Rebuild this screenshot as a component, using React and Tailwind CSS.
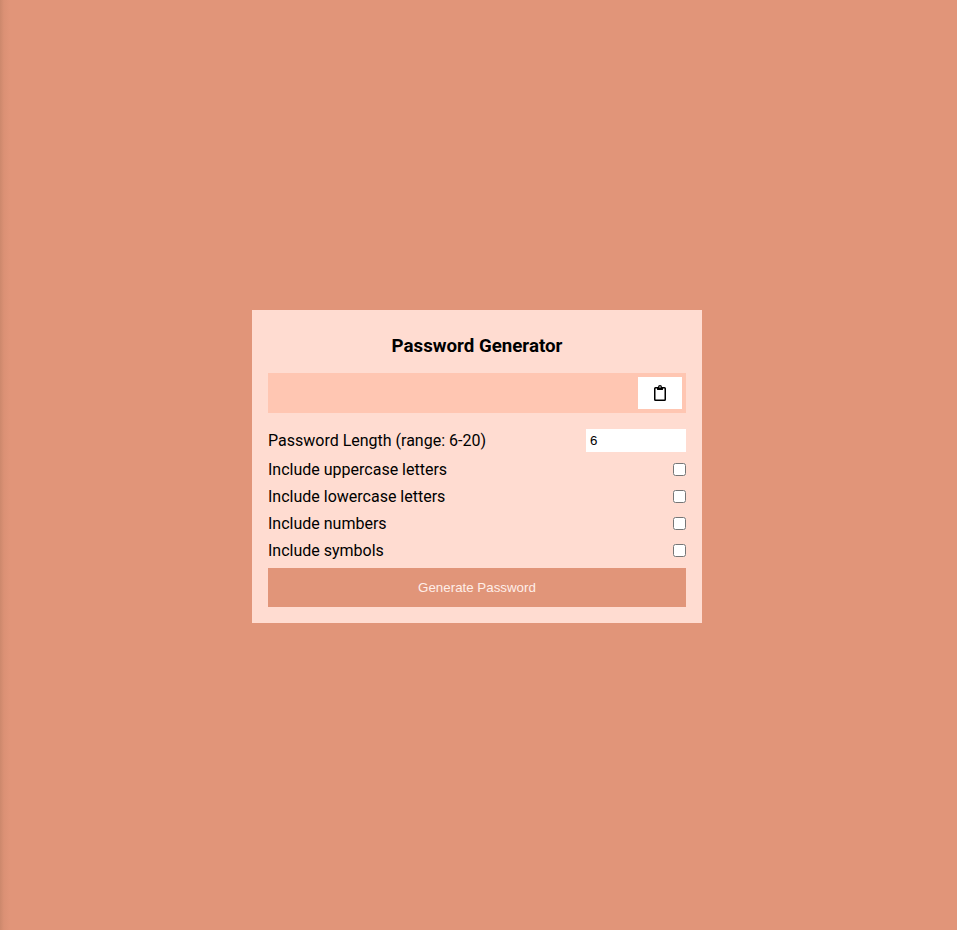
const options = ['uppercase letters', 'lowercase letters', 'numbers', 'symbols'];

export default function App() {
  return (
    <div className="flex h-[930px] items-center justify-center bg-[linear-gradient(to_right,#cc886c_0px,#db9175_4px,#e19579_10px,#e19579_100%)] pr-[3px] pt-[3px] font-['Roboto',sans-serif] text-base text-black">
      <main className="h-[313px] w-[450px] bg-[#ffdcd1] px-4">
        <h3 className="pt-[25px] text-center text-[18.72px] leading-[22px] font-bold">Password Generator</h3>
        <div className="mt-4 flex h-10 items-center justify-end bg-[#ffc6b2] p-1">
          <button className="flex h-8 w-11 items-center justify-center bg-white" aria-label="Copy">
            <svg width="12" height="16" viewBox="0 0 12 16" fill="currentColor">
              <path fillRule="evenodd" d="M10.500 2H8a2 2 0 0 0-4 0H1.500A1.500 1.500 0 0 0 0 3.500v11A1.500 1.500 0 0 0 1.500 16h9a1.500 1.500 0 0 0 1.500-1.500v-11A1.500 1.500 0 0 0 10.500 2zM6 1.250a.75.75 0 0 1 0 1.500.75.75 0 0 1 0-1.500zM10.300 14.500H1.700a.2.2 0 0 1-.2-.2V3.700a.2.2 0 0 1 .2-.2H3v1.100c0 .22.18.4.4.4h5.200a.4.4 0 0 0 .4-.4V3.500h1.300c.11 0 .2.09.2.2v10.600a.2.2 0 0 1-.2.2z" />
            </svg>
          </button>
        </div>
        <div className="mt-4 flex h-[23px] items-center justify-between">
          <label>Password Length (range: 6-20)</label>
          <input type="text" defaultValue="6" className="h-[23px] w-[100px] bg-white px-1 font-['Liberation_Sans',sans-serif] text-[13.333px]" />
        </div>
        <div className="mt-1">
          {options.map((o) => (
            <div key={o} className="flex h-[27px] items-center justify-between">
              <label>Include {o}</label>
              <input type="checkbox" className="h-[13px] w-[13px]" />
            </div>
          ))}
        </div>
        <button className="mt-1 h-[39px] w-full bg-[#e19579] font-['Liberation_Sans',sans-serif] text-[13.333px] text-[#ffeee8]">Generate Password</button>
      </main>
    </div>
  );
}
